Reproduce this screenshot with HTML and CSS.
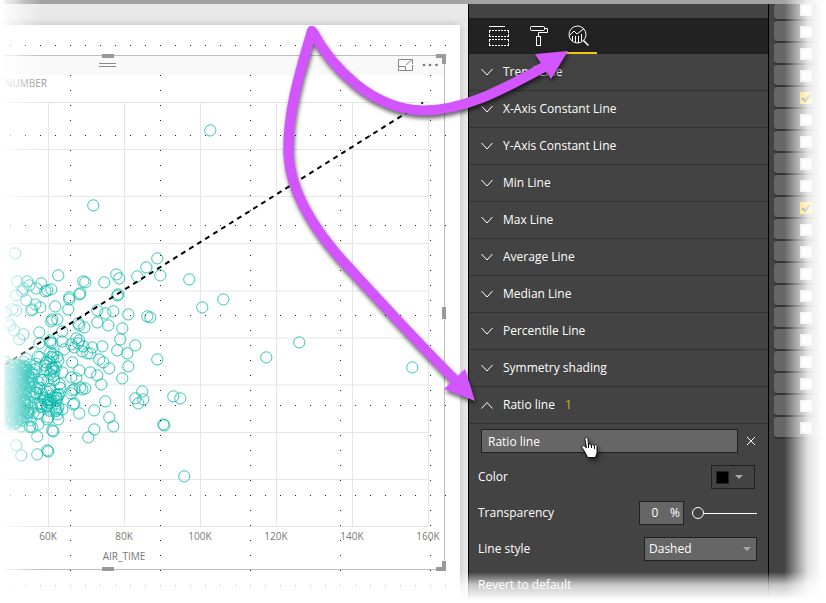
FILE: index.html
```html
<!DOCTYPE html>
<html lang="en">
<head>
<meta charset="utf-8">
<title>Ratio line analytics</title>
<link rel="stylesheet" href="styles.css">
</head>
<body>
<div class="app">
  <div class="topbar"></div>
  <div class="workspace">
    <main class="canvas">
      <div class="page">
        <svg class="chart" viewBox="4 25 456 578" role="img" aria-label="Scatter chart by AIR_TIME">
          <rect x="0" y="56" width="444" height="19" fill="#f9f9f9"/>
          <g class="grid-lines">
            <path d="M48.500 102V527M124.500 102V527M200.500 102V527M276.500 102V527M352.500 102V527M428.500 102V527"/>
            <path d="M0 102.500H428M0 149.500H428M0 196.500H428M0 243.500H428M0 291H428M0 338H428M0 385H428M0 432.500H428M0 479.500H428M0 526.500H428"/>
          </g>
          <g id="points" class="points"></g>
          <path class="ratio-line" d="M5 364.500L423 102.500"/>
          <g class="snap-dots">
            <path d="M10 45.500H446M10 135.500H446M10 225.500H446M10 315.500H446M10 405.500H446M10 495.500H446M10 585.500H446"/>
            <path d="M70.500 75V571M160.500 75V571M250.500 75V571M340.500 75V571M430.500 75V571"/>
          </g>
          <path class="frame" d="M0 55.500H444.500V569.500H0"/>
          <path class="handles" d="M102 54h12v4h-12zM102 567h12v4h-12zM442 307h4v12h-4zM436 54h10v10h-4v-6h-6zM446 561v10h-10v-4h6v-6z"/>
          <path class="grip" d="M99 63.500H116M99 66.500H116"/>
          <g class="focus-icon">
            <path d="M410 59.500H398.500V70.500H412.500V65M398.500 66.500H405.500V70.500M406 65L412 59.500M407.500 59.500H412.500V64"/>
          </g>
          <g fill="#777"><circle cx="424" cy="65" r="1.300"/><circle cx="430" cy="65" r="1.300"/><circle cx="436.500" cy="65" r="1.300"/></g>
          <text class="chart-title" x="5" y="87">NUMBER</text>
          <g class="axis">
            <text x="48" y="540">60K</text><text x="124" y="540">80K</text><text x="200" y="540">100K</text>
            <text x="276" y="540">120K</text><text x="352" y="540">140K</text><text x="428" y="540">160K</text>
            <text x="124" y="560">AIR_TIME</text>
          </g>
        </svg>
      </div>
    </main>

    <aside class="panel">
      <nav class="tabs">
        <button class="tab" aria-label="Fields">
          <svg viewBox="0 0 40 36"><path d="M12 8.500H28"/><path stroke-dasharray="2 1" d="M12 12.500H32M12 18.500H32M12 21.500H32M12 27.500H32M12.500 13V18M31.500 13V18M12.500 22V27M31.500 22V27"/></svg>
        </button>
        <button class="tab" aria-label="Format">
          <svg viewBox="0 0 40 36"><rect x="13.500" y="8.500" width="14" height="4" rx="1"/><path d="M27.500 10.500H30.500V14.500H21.500V18.500"/><rect x="19.500" y="18.500" width="4" height="9"/></svg>
        </button>
        <button class="tab tab-active" aria-label="Analytics">
          <svg viewBox="0 0 40 36"><circle cx="20.500" cy="16.500" r="8.500"/><path d="M12.500 17.500L17 13L20 16L27 10.500M15.500 18V23M18.500 18V25M21.500 18V25M24.500 16V23"/><path stroke-width="1.500" d="M26.500 22.500L31.500 27.500"/></svg>
        </button>
      </nav>
      <button class="section"><svg viewBox="0 0 12 8"><path d="M.5 1L6 7L11.500 1"/></svg>Trend Line</button>
      <button class="section"><svg viewBox="0 0 12 8"><path d="M.5 1L6 7L11.500 1"/></svg>X-Axis Constant Line</button>
      <button class="section"><svg viewBox="0 0 12 8"><path d="M.5 1L6 7L11.500 1"/></svg>Y-Axis Constant Line</button>
      <button class="section"><svg viewBox="0 0 12 8"><path d="M.5 1L6 7L11.500 1"/></svg>Min Line</button>
      <button class="section"><svg viewBox="0 0 12 8"><path d="M.5 1L6 7L11.500 1"/></svg>Max Line</button>
      <button class="section"><svg viewBox="0 0 12 8"><path d="M.5 1L6 7L11.500 1"/></svg>Average Line</button>
      <button class="section"><svg viewBox="0 0 12 8"><path d="M.5 1L6 7L11.500 1"/></svg>Median Line</button>
      <button class="section"><svg viewBox="0 0 12 8"><path d="M.5 1L6 7L11.500 1"/></svg>Percentile Line</button>
      <button class="section"><svg viewBox="0 0 12 8"><path d="M.5 1L6 7L11.500 1"/></svg>Symmetry shading</button>
      <button class="section" aria-expanded="true"><svg viewBox="0 0 12 8"><path d="M.5 7.500L6 1.500L11.500 7.500"/></svg>Ratio line<span class="count">1</span></button>
      <form class="settings">
        <div class="setting setting-name">
          <input class="box name" type="text" value="Ratio line" aria-label="Line name">
          <button class="remove" type="button" aria-label="Remove line"><svg viewBox="0 0 10 10"><path d="M1 1L9 9M9 1L1 9"/></svg></button>
        </div>
        <div class="setting">
          <label for="color">Color</label>
          <button class="color" id="color" type="button"><span class="swatch"></span><span class="caret"></span></button>
        </div>
        <div class="setting">
          <label for="transparency">Transparency</label>
          <div class="percent box"><input id="transparency" type="text" value="0"><span>%</span></div>
          <input class="slider" type="range" min="0" max="100" value="0" aria-label="Transparency slider">
        </div>
        <div class="setting">
          <label for="style">Line style</label>
          <div class="select-wrap"><select class="box" id="style"><option>Dashed</option></select><span class="caret"></span></div>
        </div>
        <div class="setting"><button class="revert" type="button">Revert to default</button></div>
      </form>
    </aside>

    <div class="fields" id="fields"></div>
  </div>

  <div class="fade fade-left"></div>
  <div class="fade fade-right"></div>
  <div class="fade fade-bottom"></div>

  <svg class="annotation" viewBox="0 0 826 603" width="826" height="603" aria-hidden="true">
    <g class="arrows">
      <path class="stroke" d="M312 31C298 77 287 116 288.500 155C291 200 325 243 353 272C385 307 420 345 456 381"/>
      <path class="stroke" d="M312 31C332 68 372 109 423 110.500C468 110.500 510 85 546 66"/>
      <path class="head" d="M475 401L444 389L465 369zM568 51L535 54L551 79z"/>
    </g>
    <path class="cursor" d="M586.500 437.500c-1.500 0-1.500 1-1.500 2l1.500 8.500-2-2c-1.500-1-3 0-2.500 1.500l4 6.500 1.500 3.500h8l1.500-5v-6c0-2-2.500-2.500-3-.5 0-2-2.500-2.500-3-.5 0-2-2.500-2-2.500 0l-.5-6c0-1-.5-2-1.500-2z"/>
    <path class="cursor-lines" d="M588.500 443v5M591.500 445v3M594.500 446v3"/>
  </svg>
</div>
<script src="script.js"></script>
</body>
</html>
```
FILE: styles.css
```css
* { box-sizing: border-box; }
body { margin: 0; background: #fff; font: 12px/16px "Open Sans", "Noto Sans", sans-serif; }
button, input, select { font: inherit; color: inherit; }
button { background: none; border: 0; padding: 0; }

.app { position: relative; min-height: 100vh; display: flex; flex-direction: column; overflow: hidden; }
.topbar { height: 4px; background: #a3a3a3; }
.workspace { flex: 1; display: flex; }

.canvas { flex: 1; min-width: 0; padding: 21px 8px 0 4px; background: #e9e9e9; }
.page { height: 100%; background: #fff; box-shadow: 0 0 8px rgba(0, 0, 0, .2); }
.chart { display: block; width: 100%; }
.grid-lines { fill: none; stroke: #e6e6e6; }
.points { fill: none; stroke: #01b8aa; stroke-opacity: .8; }
.ratio-line { stroke: #000; stroke-width: 2; stroke-dasharray: 5 4.450; }
.snap-dots { stroke: #222; stroke-dasharray: 1 14; }
.frame { fill: none; stroke: #bdbdbd; }
.handles { fill: #999; }
.grip { stroke: #888; }
.focus-icon { fill: none; stroke: #888; }
.chart-title { fill: #999; font-size: 10px; }
.axis { fill: #777; font-size: 10px; text-anchor: middle; }

.panel { width: 301px; padding-top: 14px; background: #434343; border: solid #000; border-width: 0 1px; color: #fff; }
.tabs { display: flex; height: 36px; padding-left: 8px; background: #212121; }
.tab { width: 40px; }
.tab svg { display: block; width: 40px; height: 36px; fill: none; stroke: #fff; }
.tab-active { box-shadow: inset 0 -2px #f2c811; }
.section { display: flex; align-items: center; gap: 10px; width: 100%; height: 37px; padding-left: 12px; border-bottom: 1px solid #323232; }
.section svg { width: 12px; height: 8px; fill: none; stroke: #fff; }
.count { color: #d9b611; }

.settings { display: flex; flex-direction: column; gap: 12px; padding: 5px 11px 0 9px; }
.setting { display: flex; align-items: center; height: 24px; }
.setting label { flex: 1; }
.setting-name { padding-left: 3px; }
.box { height: 24px; border: 1px solid #212121; background: #666; }
.name { flex: 1; min-width: 0; padding: 0 6px; }
.remove { width: 19px; height: 24px; padding-left: 8px; }
.remove svg { display: block; width: 10px; height: 10px; stroke: #fff; }
.color { display: flex; align-items: center; gap: 6px; width: 44px; height: 24px; margin-right: 2px; padding-left: 4px; border: 1px solid #212121; }
.swatch { width: 13px; height: 13px; background: #000; border: 1px solid #212121; }
.caret { border: solid transparent; border-width: 4px 4px 0; border-top-color: #aaa; }
.percent { display: flex; align-items: center; width: 45px; padding-right: 3px; }
.percent input { flex: 1; min-width: 0; padding: 0; border: 0; background: none; text-align: center; }
.slider { appearance: none; width: 65px; height: 12px; margin: 0 0 0 8px; background: linear-gradient(#fff, #fff) 12px 6px / 100% 1px no-repeat; }
.slider::-webkit-slider-thumb { appearance: none; width: 12px; height: 12px; border: 1px solid #fff; border-radius: 50%; background: #434343; }
.select-wrap { display: flex; align-items: center; width: 113px; }
.select-wrap select { appearance: none; width: 100%; padding: 0 4px; border-radius: 0; }
.select-wrap .caret { margin-left: -14px; }

.fields { display: flex; flex-direction: column; gap: 2px; width: 57px; padding-left: 5px; background: #434343; }
.field { display: flex; align-items: flex-end; height: 20px; padding: 0 0 3px 26px; background: #666; border-radius: 3px 0 0 3px; box-shadow: 0 2px #323232; }
.field:first-child { height: 15px; }
.field input { appearance: none; width: 12px; height: 12px; margin: 0; border: 2px solid #ddd; background: #fff; }
.field input:checked { border: 0; background: #f2c811; }
.field label { position: relative; display: block; height: 12px; }
.field svg { position: absolute; inset: 0; width: 12px; height: 12px; fill: none; stroke: #222; stroke-width: 2; }

.fade { position: absolute; pointer-events: none; }
.fade-left { inset: 0 auto 0 0; width: 42px; background: linear-gradient(90deg, #fff 3px, rgba(255, 255, 255, .8) 6px, rgba(255, 255, 255, .65) 14px, rgba(255, 255, 255, .3) 26px, transparent); }
.fade-right { inset: 0 0 0 auto; width: 42px; background: linear-gradient(90deg, transparent, rgba(255, 255, 255, .5) 14px, rgba(255, 255, 255, .85) 24px, #fff 38px); }
.fade-bottom { inset: auto 0 0 0; height: 31px; background: linear-gradient(transparent, rgba(255, 255, 255, .7) 13px, #fff 28px); }
.annotation { position: absolute; top: 0; left: 0; pointer-events: none; }
.arrows { filter: drop-shadow(1px 3px 2px rgba(0, 0, 0, .6)); }
.stroke { fill: none; stroke: #d355ff; stroke-width: 10; stroke-linecap: round; }
.head { fill: #d355ff; }
.cursor { fill: #fff; stroke: #111; filter: drop-shadow(2px 3px 2px rgba(0, 0, 0, .5)); }
.cursor-lines { stroke: #111; }
```
FILE: script.js
```js
const SVG = "http://www.w3.org/2000/svg";
const points = [
  [210,130],[93,205],[15,253],[58,275],[83,281],[85,282],[104,282],[116,274],[119,278],[80,293],[79,294],[69,297],[69,299],
  [68,309],[55,306],[41,283],[51,289],[47,290],[45,291],[36,288],[17,281],[27,281],[23,288],[29,285],[16,295],[22,291],[26,300],
  [35,304],[40,307],[32,309],[31,310],[16,310],[12,309],[5,312],[52,319],[57,319],[51,321],[97,310],[113,311],[105,313],[97,322],
  [108,325],[118,294],[117,295],[128,314],[122,328],[120,339],[78,323],[84,327],[79,325],[62,331],[39,332],[23,334],[14,330],
  [19,339],[39,343],[50,340],[50,342],[62,341],[76,338],[79,340],[78,343],[92,347],[102,346],[83,346],[71,344],[74,347],[8,322],
  [10,325],[117,350],[127,353],[109,368],[122,378],[128,366],[103,362],[99,359],[90,353],[87,353],[82,351],[72,362],[79,370],
  [90,372],[97,375],[101,384],[76,378],[71,377],[85,388],[82,389],[80,387],[72,390],[71,393],[74,389],[74,403],[73,404],
  [79,413],[94,410],[105,401],[109,417],[113,426],[94,429],[88,437],[58,419],[48,417],[47,419],[53,431],[52,430],[62,409],
  [58,407],[55,407],[48,402],[50,403],[37,436],[32,427],[38,424],[21,426],[16,445],[21,455],[37,454],[47,450],[48,451],
  [54,371],[53,368],[52,367],[51,369],[62,372],[50,352],[53,354],[52,343],[64,349],[157,258],[146,267],[160,275],[137,276],
  [189,279],[202,307],[223,299],[147,316],[150,317],[135,345],[157,359],[266,357],[142,391],[135,398],[143,399],[138,403],
  [173,396],[180,398],[163,424],[164,425],[184,476],[299,342],[412,367]
];

// Seeded generator keeps the dense cluster identical on every load.
let seed = 7;
function random() {
  seed = (seed * 16807) % 2147483647;
  return seed / 2147483647;
}
for (let i = 0; i < 200; i++) {
  const x = 3 + 24 * random() * (0.4 + random());
  points.push([x, 360 + x / 6 + 62 * random()]);
}
for (let i = 0; i < 85; i++) {
  points.push([18 + 42 * random(), 356 + 58 * random()]);
}
const group = document.getElementById("points");
for (const [x, y] of points) {
  const circle = document.createElementNS(SVG, "circle");
  circle.setAttribute("cx", x + 0.3);
  circle.setAttribute("cy", y + 0.4);
  circle.setAttribute("r", 5.6);
  group.append(circle);
}

const fields = document.getElementById("fields");
for (let i = 0; i < 20; i++) {
  const checked = i === 4 || i === 9;
  const row = document.createElement("div");
  row.className = "field";
  row.innerHTML = `<label><input type="checkbox" aria-label="Field ${i + 1}"${checked ? " checked" : ""}>${checked ? '<svg viewBox="0 0 12 12"><path d="M2 6L5 9L10 3"/></svg>' : ""}</label>`;
  fields.append(row);
}
```
